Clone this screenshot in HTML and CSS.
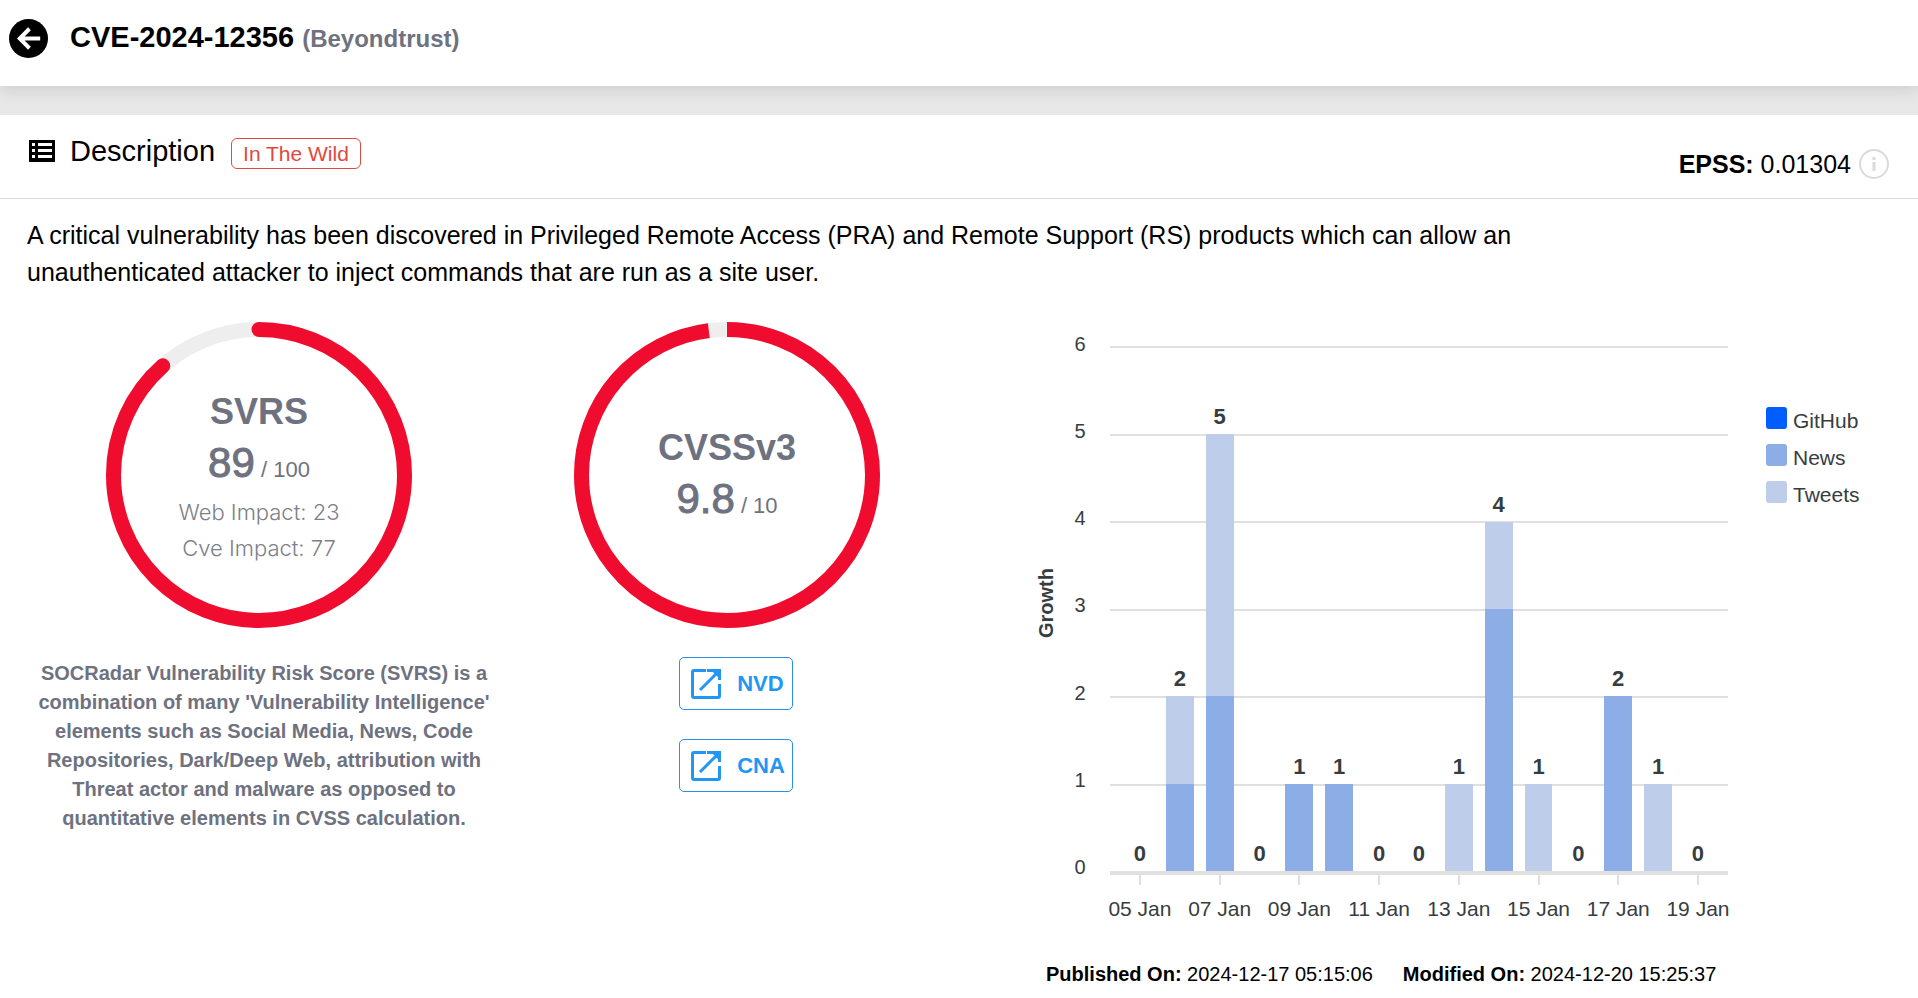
FILE: index.html
```html
<!DOCTYPE html>
<html lang="en">
<head>
<meta charset="utf-8">
<title>CVE-2024-12356</title>
<link rel="stylesheet" href="styles.css">
</head>
<body>
<header class="topbar">
  <button class="back" type="button" aria-label="Back">
    <svg viewBox="0 0 40 40" aria-hidden="true"><circle cx="20" cy="20" r="20"/><path d="M32 20H12M21 10L11 20l10 10"/></svg>
  </button>
  <h1 class="title">CVE-2024-12356 <span class="vendor">(Beyondtrust)</span></h1>
</header>
<main class="card">
  <div class="card-head">
    <svg class="list-icon" viewBox="0 0 26 22" aria-hidden="true"><path fill-rule="evenodd" d="M0 0H26V22H0zM3 3V6H6V3zM9 3V6H23V3zM3 9V12H6V9zM9 9V12H23V9zM3 15V18H6V15zM9 15V18H23V15z"/></svg>
    <h2 class="section-title">Description</h2>
    <span class="badge">In The Wild</span>
    <div class="epss"><span><b>EPSS:</b> 0.01304</span>
      <svg class="info-icon" viewBox="0 0 30 30" aria-hidden="true"><circle cx="15" cy="15" r="14"/><path d="M15 13V22M15 8V11"/></svg>
    </div>
  </div>
  <p class="summary">A critical vulnerability has been discovered in Privileged Remote Access (PRA) and Remote Support (RS) products which can allow an unauthenticated attacker to inject commands that are run as a site user.</p>
  <div class="panels">
    <section class="score">
      <div class="gauge">
        <svg class="ring" viewBox="0 0 306 306" aria-hidden="true"><circle class="track" cx="153" cy="153" r="145.5"/><circle class="value round" cx="153" cy="153" r="145.5" pathLength="100" stroke-dasharray="88.5 100"/></svg>
        <div class="gauge-text">
          <h3 class="gauge-name">SVRS</h3>
          <div class="gauge-score"><span class="big">89</span> / 100</div>
          <div class="impact">Web Impact: 23</div>
          <div class="impact">Cve Impact: 77</div>
        </div>
      </div>
      <p class="note">SOCRadar Vulnerability Risk Score (SVRS) is a combination of many 'Vulnerability Intelligence' elements such as Social Media, News, Code Repositories, Dark/Deep Web, attribution with Threat actor and malware as opposed to quantitative elements in CVSS calculation.</p>
    </section>
    <section class="score">
      <div class="gauge">
        <svg class="ring" viewBox="0 0 306 306" aria-hidden="true"><circle class="track" cx="153" cy="153" r="145.5"/><circle class="value" cx="153" cy="153" r="145.5" pathLength="100" stroke-dasharray="98 100"/></svg>
        <div class="gauge-text">
          <h3 class="gauge-name">CVSSv3</h3>
          <div class="gauge-score"><span class="big">9.8</span> / 10</div>
        </div>
      </div>
      <div class="links">
        <a class="link" href="#nvd"><svg viewBox="0 0 30 30" aria-hidden="true"><path d="M15 1.5H3Q1.500 1.500 1.500 3V27Q1.500 28.500 3 28.500H27Q28.500 28.500 28.500 27V15M16 1.500H28.500V11M28 2L9 21M23 2L28 7"/></svg>NVD</a>
        <a class="link" href="#cna"><svg viewBox="0 0 30 30" aria-hidden="true"><path d="M15 1.5H3Q1.500 1.500 1.500 3V27Q1.500 28.500 3 28.500H27Q28.500 28.500 28.500 27V15M16 1.500H28.500V11M28 2L9 21M23 2L28 7"/></svg>CNA</a>
      </div>
    </section>
    <section class="activity">
      <div class="chart">
        <div class="y-title">Growth</div>
        <div class="y-axis"><span>6</span><span>5</span><span>4</span><span>3</span><span>2</span><span>1</span><span>0</span></div>
        <div class="plot">
          <div class="lines"><i></i><i></i><i></i><i></i><i></i><i></i><i></i></div>
          <div class="bars">
            <div class="col"><b>0</b></div>
            <div class="col"><b>2</b><i class="tweets" style="height:16.667%"></i><i class="news" style="height:16.667%"></i></div>
            <div class="col"><b>5</b><i class="tweets" style="height:50%"></i><i class="news" style="height:33.333%"></i></div>
            <div class="col"><b>0</b></div>
            <div class="col"><b>1</b><i class="news" style="height:16.667%"></i></div>
            <div class="col"><b>1</b><i class="news" style="height:16.667%"></i></div>
            <div class="col"><b>0</b></div>
            <div class="col"><b>0</b></div>
            <div class="col"><b>1</b><i class="tweets" style="height:16.667%"></i></div>
            <div class="col"><b>4</b><i class="tweets" style="height:16.667%"></i><i class="news" style="height:50%"></i></div>
            <div class="col"><b>1</b><i class="tweets" style="height:16.667%"></i></div>
            <div class="col"><b>0</b></div>
            <div class="col"><b>2</b><i class="news" style="height:33.333%"></i></div>
            <div class="col"><b>1</b><i class="tweets" style="height:16.667%"></i></div>
            <div class="col"><b>0</b></div>
          </div>
        </div>
        <ul class="legend"><li><i class="github"></i>GitHub</li><li><i class="news"></i>News</li><li><i class="tweets"></i>Tweets</li></ul>
        <div class="x-axis"><span>05 Jan</span><span></span><span>07 Jan</span><span></span><span>09 Jan</span><span></span><span>11 Jan</span><span></span><span>13 Jan</span><span></span><span>15 Jan</span><span></span><span>17 Jan</span><span></span><span>19 Jan</span></div>
      </div>
      <div class="dates"><span><b>Published On:</b> 2024-12-17 05:15:06</span><span><b>Modified On:</b> 2024-12-20 15:25:37</span></div>
    </section>
  </div>
</main>
</body>
</html>
```

FILE: styles.css
```css
* { box-sizing: border-box; }
body {
  margin: 0;
  background: #e8e8e8;
  color: #000;
  font: 20px/24px "Liberation Sans", Arial, sans-serif;
}
h1, h2, h3, p, ul { margin: 0; padding: 0; }
svg { display: block; flex: none; }

.topbar {
  display: flex;
  align-items: center;
  gap: 22px;
  height: 86px;
  padding: 0 9px 10px;
  background: #fff;
  box-shadow: 0 4px 16px rgba(0, 0, 0, .12);
}
.back { width: 39px; height: 39px; padding: 0; border: 0; background: none; }
.back circle { fill: #000; }
.back path { fill: none; stroke: #fff; stroke-width: 4; }
.title { font-size: 29px; line-height: 36px; }
.vendor { color: #6e7280; font-size: 24px; }

.card { margin-top: 29px; padding-bottom: 12px; background: #fff; }
.card-head {
  display: flex;
  align-items: center;
  height: 84px;
  padding: 0 29px;
  border-bottom: 1px solid #dcdcdc;
}
.list-icon { width: 26px; height: 22px; margin-bottom: 12px; }
.section-title { margin: 0 16px 12px 15px; font-size: 29px; line-height: 36px; font-weight: 400; }
.badge {
  margin-bottom: 6px;
  padding: 1px 11px;
  border: 1px solid #e2483d;
  border-radius: 6px;
  color: #e2483d;
  font-size: 21px;
  line-height: 27px;
}
.epss {
  display: flex;
  align-items: center;
  gap: 8px;
  margin: 14px 0 0 auto;
  font-size: 25px;
}
.info-icon { width: 30px; height: 30px; fill: none; stroke: #dadada; stroke-width: 2; }
.info-icon path { stroke-width: 3; }

.summary {
  max-width: 1600px;
  padding: 18px 27px 0;
  font-size: 25px;
  line-height: 37px;
}
.panels {
  display: grid;
  grid-template-columns: 468fr 468fr 957fr;
  padding-left: 25px;
  margin-top: 31px;
}
.score { display: flex; flex-direction: column; align-items: center; }
.gauge { display: grid; width: 306px; height: 306px; }
.gauge > * { grid-area: 1 / 1; }
.ring { transform: rotate(-90deg); fill: none; stroke-width: 15; }
.track { stroke: #eee; }
.value { stroke: #f00c2e; }
.round { stroke-linecap: round; }
.gauge-text {
  display: flex;
  flex-direction: column;
  justify-content: center;
  align-items: center;
  color: #6e7280;
}
.gauge-name { font-size: 36px; line-height: 54px; }
.gauge-score { font-size: 22px; line-height: 48px; }
.big { font-size: 42px; -webkit-text-stroke: 1px #6e7280; }
.impact { color: #7c8089; font: 300 22px/36px Inter, sans-serif; }
.note {
  width: 456px;
  margin: 31px 0 0 10px;
  color: #6e7280;
  font-weight: 700;
  line-height: 29px;
  text-align: center;
}
.links { display: flex; flex-direction: column; gap: 29px; margin: 29px 0 0 18px; }
.link {
  display: flex;
  align-items: center;
  gap: 16px;
  height: 53px;
  padding: 0 7px 0 11px;
  border: 1px solid #2a8fe6;
  border-radius: 5px;
  color: #2196f3;
  font-size: 22px;
  font-weight: 700;
  text-decoration: none;
}
.link svg { width: 30px; height: 30px; fill: none; stroke: #2196f3; stroke-width: 3; }

.activity { padding: 10px 58px 0 73px; }
.chart {
  display: grid;
  grid-template-columns: 24px 44px 1fr 132px;
  grid-template-rows: 541px auto;
  color: #373d3f;
}
.y-title {
  align-self: center;
  font-weight: 700;
  text-align: center;
  writing-mode: vertical-rl;
  transform: rotate(180deg);
}
.y-axis {
  display: flex;
  flex-direction: column;
  justify-content: space-between;
  margin-bottom: -6px;
  text-align: center;
}
.plot { display: grid; margin: 14px 0 0 8px; }
.plot > * { grid-area: 1 / 1; }
.lines {
  display: flex;
  flex-direction: column;
  justify-content: space-between;
}
.lines i { height: 2px; background: #e0e0e0; }
.bars { display: flex; padding: 0 10px; margin-top: 1px; height: 524px; }
.col {
  display: flex;
  flex: 1;
  flex-direction: column;
  justify-content: flex-end;
  align-items: center;
}
.col b { margin-bottom: 5px; font-size: 22px; }
.col i { flex: none; width: 70%; }
.github { background: #005dff; }
.news { background: #8dade6; }
.tweets { background: #becdea; }
.legend { padding: 70px 0 0 38px; list-style: none; font-size: 21px; }
.legend li { display: flex; align-items: center; gap: 6px; height: 37px; }
.legend i { width: 21px; height: 22px; margin-bottom: 5px; border-radius: 3px; }
.x-axis {
  display: flex;
  grid-column: 3;
  margin-left: 8px;
  padding: 0 10px;
  border-top: 2px solid #e0e0e0;
  font-size: 21px;
}
.x-axis span {
  display: flex;
  flex: 1;
  flex-direction: column;
  align-items: center;
  min-width: 0;
  white-space: nowrap;
}
.x-axis span:nth-child(odd)::before {
  width: 2px;
  height: 10px;
  margin-bottom: 12px;
  background: #e0e0e0;
  content: "";
}
.dates { display: flex; gap: 30px; margin: 41px 0 0 12px; }
```
